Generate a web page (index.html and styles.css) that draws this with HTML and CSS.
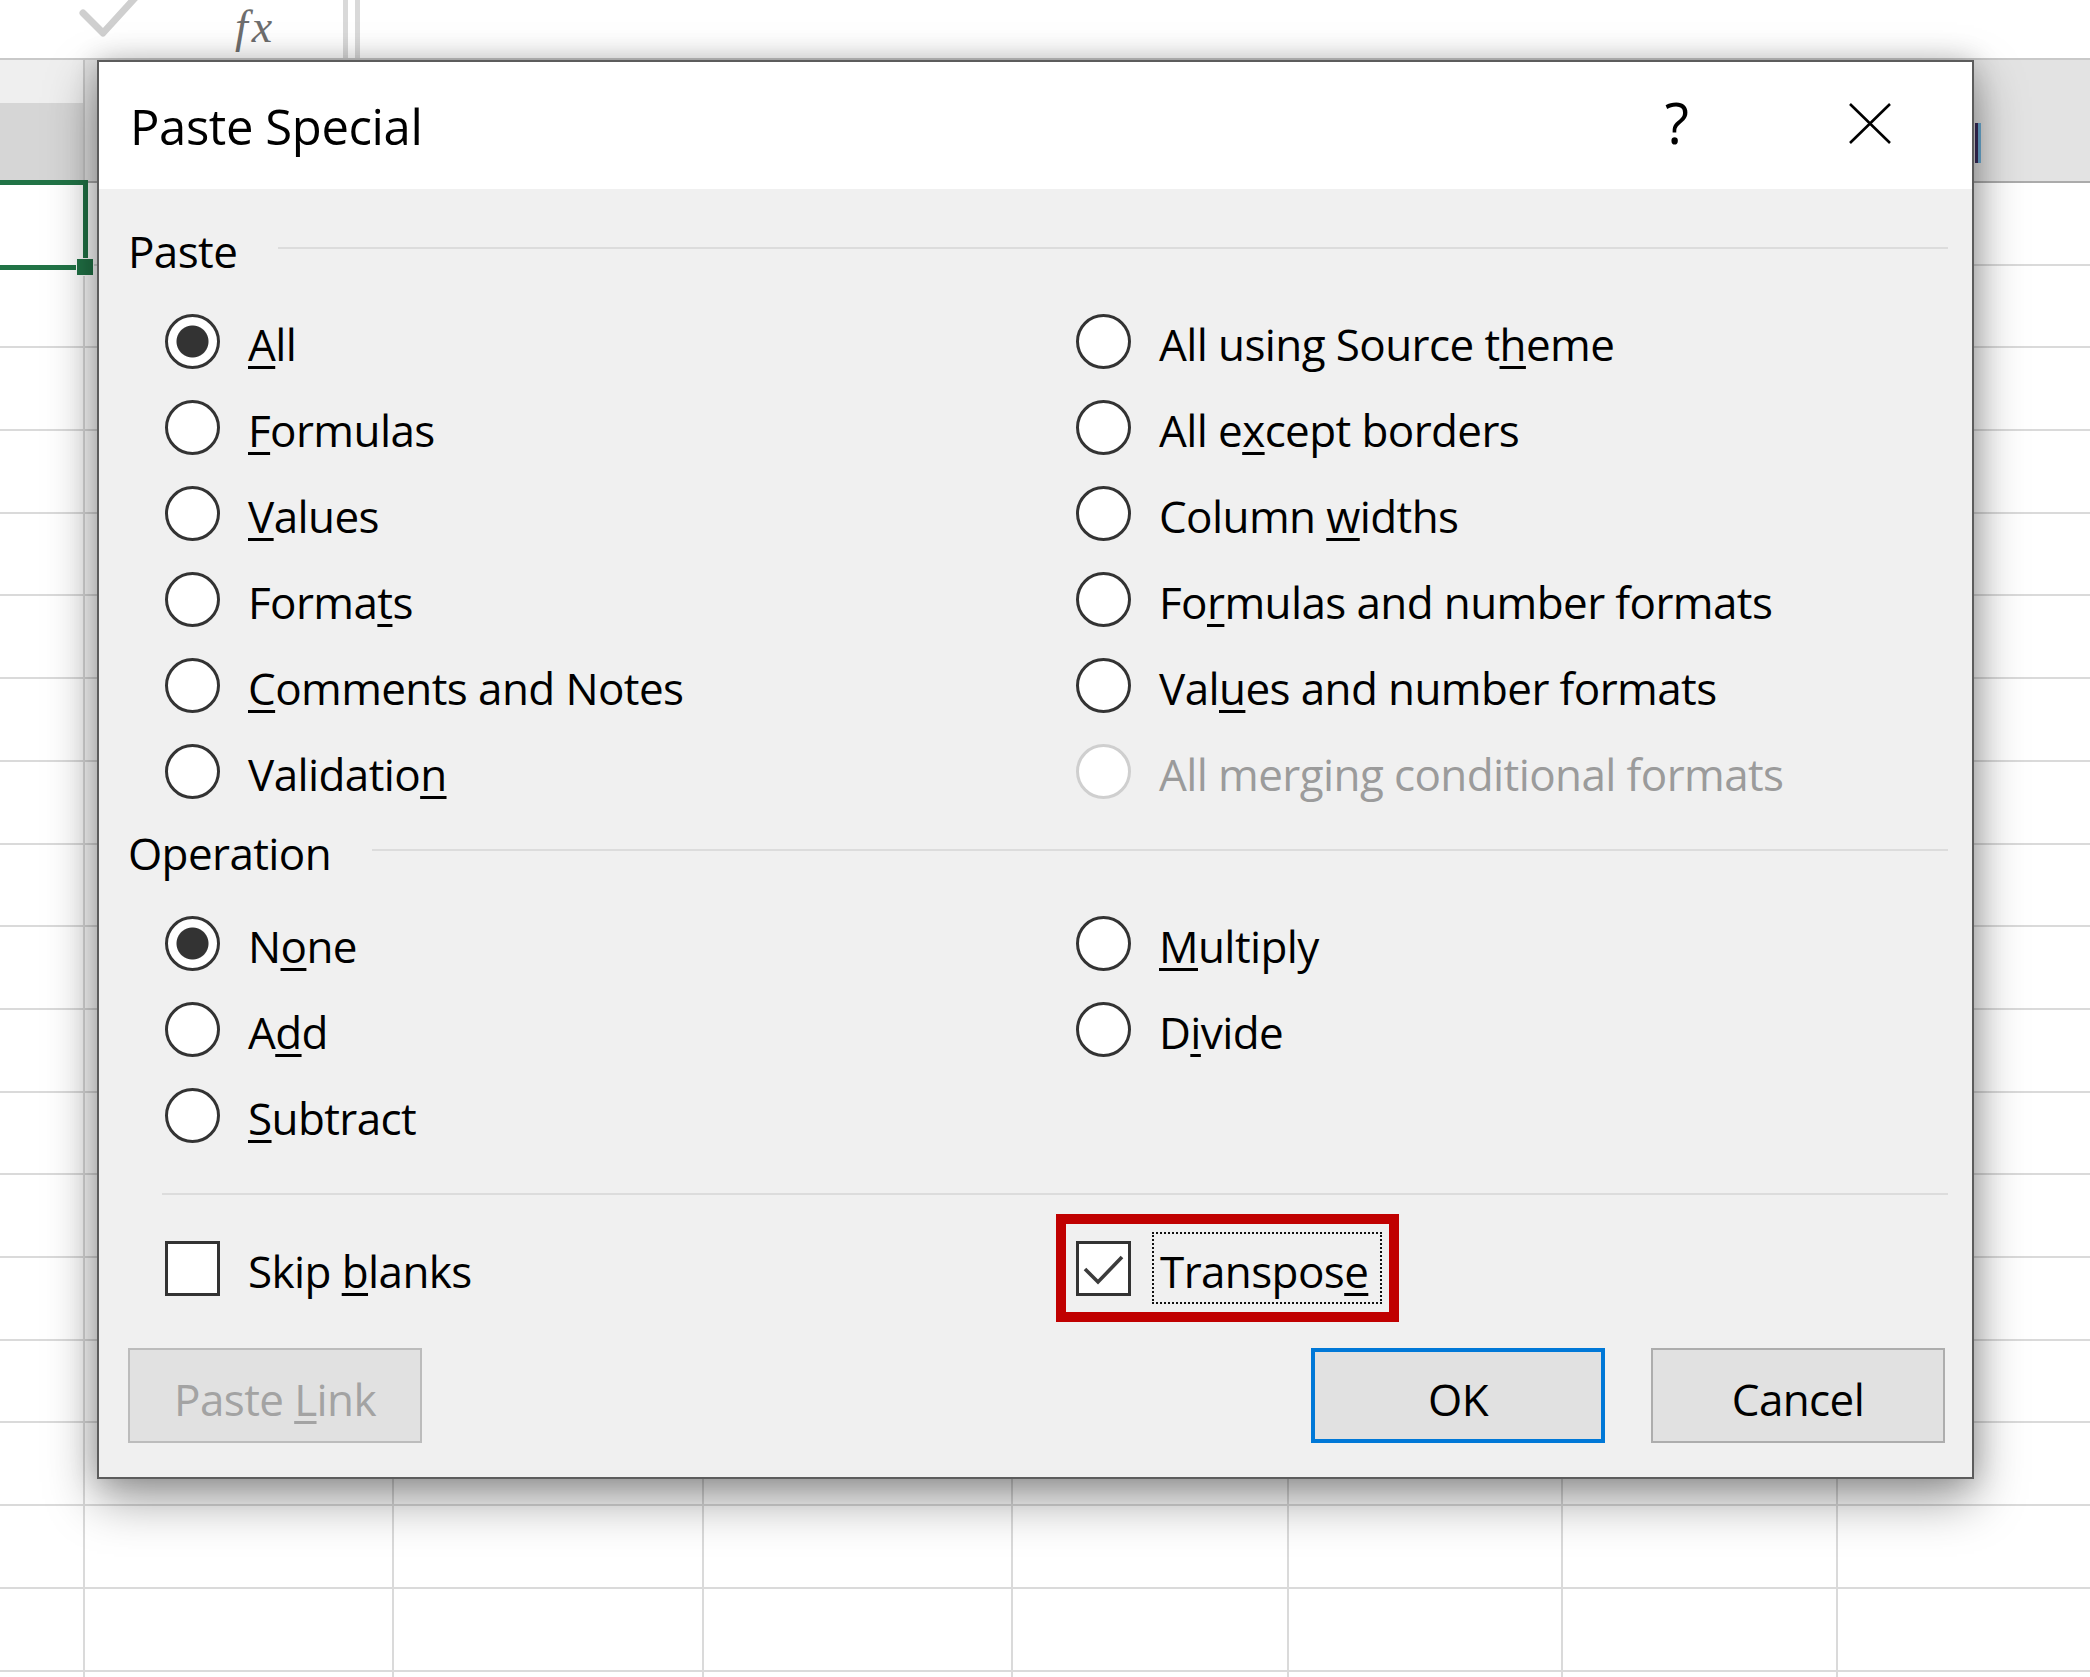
FILE: index.html
```html
<!DOCTYPE html>
<html lang="en">
<head>
<meta charset="utf-8">
<title>Paste Special</title>
<link rel="stylesheet" href="styles.css">
</head>
<body>
<div class="sheet">
  <div class="formula-bar">
    <svg class="fb-check" width="60" height="40" viewBox="0 0 60 40"><path d="M5 13 L25 33 L57 -2" fill="none" stroke="#cfcfcf" stroke-width="7" stroke-linecap="round" stroke-linejoin="round"/></svg>
    <span class="fb-fx">fx</span>
    <div class="fb-sep"></div>
  </div>
  <div class="col-header">
    <div class="hcell hcell-first"></div>
    <div class="hcell"></div>
    <div class="hcell"></div>
    <div class="hcell"></div>
    <div class="hcell"></div>
    <div class="hcell"></div>
    <div class="hcell"></div>
    <div class="hcell hcell-last"><span class="hdr-mark"></span></div>
  </div>
  <div class="cells">
    <div class="col"><div class="sel"><span class="handle"></span></div></div>
    <div class="col"></div>
    <div class="col"></div>
    <div class="col"></div>
    <div class="col"></div>
    <div class="col"></div>
    <div class="col"></div>
    <div class="col col-last"></div>
  </div>
</div>

<div class="dialog">
  <div class="titlebar">
    <span class="title">Paste Special</span>
    <span class="help">?</span>
    <svg class="close" width="42" height="41" viewBox="0 0 42 41"><path d="M1 1 L41 40 M41 1 L1 40" stroke="#000" stroke-width="2.6" fill="none"/></svg>
  </div>
  <div class="body">
    <div class="group-head"><span class="group-label">Paste</span><span class="group-line"></span></div>
    <div class="options">
      <div class="opt"><span class="radio on"></span><span class="lbl"><u>A</u>ll</span></div>
      <div class="opt"><span class="radio"></span><span class="lbl">All using Source t<u>h</u>eme</span></div>
      <div class="opt"><span class="radio"></span><span class="lbl"><u>F</u>ormulas</span></div>
      <div class="opt"><span class="radio"></span><span class="lbl">All e<u>x</u>cept borders</span></div>
      <div class="opt"><span class="radio"></span><span class="lbl"><u>V</u>alues</span></div>
      <div class="opt"><span class="radio"></span><span class="lbl">Column <u>w</u>idths</span></div>
      <div class="opt"><span class="radio"></span><span class="lbl">Forma<u>t</u>s</span></div>
      <div class="opt"><span class="radio"></span><span class="lbl">Fo<u>r</u>mulas and number formats</span></div>
      <div class="opt"><span class="radio"></span><span class="lbl"><u>C</u>omments and Notes</span></div>
      <div class="opt"><span class="radio"></span><span class="lbl">Val<u>u</u>es and number formats</span></div>
      <div class="opt"><span class="radio"></span><span class="lbl">Validatio<u>n</u></span></div>
      <div class="opt opt-dis"><span class="radio"></span><span class="lbl">All mer<u>g</u>ing conditional formats</span></div>
    </div>
    <div class="group-head"><span class="group-label">Operation</span><span class="group-line"></span></div>
    <div class="options">
      <div class="opt"><span class="radio on"></span><span class="lbl">N<u>o</u>ne</span></div>
      <div class="opt"><span class="radio"></span><span class="lbl"><u>M</u>ultiply</span></div>
      <div class="opt"><span class="radio"></span><span class="lbl">A<u>d</u>d</span></div>
      <div class="opt"><span class="radio"></span><span class="lbl">D<u>i</u>vide</span></div>
      <div class="opt"><span class="radio"></span><span class="lbl"><u>S</u>ubtract</span></div>
    </div>
    <div class="sep"></div>
    <div class="checks">
      <div class="opt"><span class="checkbox"></span><span class="lbl">Skip <u>b</u>lanks</span></div>
      <div class="highlight">
        <span class="checkbox"><svg width="49" height="49" viewBox="0 0 49 49"><path d="M6 25 L19 38 L43 13" fill="none" stroke="#3c3c3c" stroke-width="3.6"/></svg></span>
        <span class="focus"><span class="lbl">Transpos<u>e</u></span></span>
      </div>
    </div>
    <div class="buttons">
      <div class="btn btn-disabled"><span class="lbl">Paste <u>L</u>ink</span></div>
      <div class="btn btn-default"><span class="lbl">OK</span></div>
      <div class="btn btn-cancel"><span class="lbl">Cancel</span></div>
    </div>
  </div>
</div>
</body>
</html>
```

FILE: styles.css
```css
html, body {
  margin: 0;
  padding: 0;
  background: #fff;
}

body {
  font-family: "Open Sans", "Noto Sans", sans-serif;
  color: #000;
  width: 2090px;
  height: 1677px;
  overflow: hidden;
  position: relative;
}

/* ---------- spreadsheet background ---------- */
.sheet {
  width: 2090px;
  height: 1677px;
  overflow: hidden;
  background: #fff;
}

.formula-bar {
  height: 58px;
  border-bottom: 2px solid #c9c9c9;
  display: flex;
  align-items: flex-start;
  padding-left: 78px;
  overflow: hidden;
  background: #fff;
}

.fb-check {
  flex: none;
}

.fb-fx {
  flex: none;
  width: 70px;
  margin-left: 97px;
  font-family: "Liberation Serif", serif;
  font-style: italic;
  font-size: 46px;
  line-height: normal;
  letter-spacing: 4px;
  color: #6e6e6e;
}

.fb-sep {
  flex: none;
  margin-left: 38px;
  width: 17px;
  height: 58px;
  box-sizing: border-box;
  border-left: 5px solid #d9d9d9;
  border-right: 5px solid #d9d9d9;
}

.col-header,
.cells {
  display: grid;
  grid-template-columns: 85px 309px 310px 309px 276px 274px 275px 252px;
}

.col-header {
  height: 123px;
  box-sizing: border-box;
  border-bottom: 2px solid #ababab;
  background: #e3e3e3;
}

.hcell {
  border-right: 2px solid #c8c8c8;
}

.hcell-first {
  background: linear-gradient(to bottom, #efefef 0 43px, #d6d6d6 43px);
}

.hcell-last {
  border-right: none;
  display: flex;
}

.hdr-mark {
  width: 6px;
  height: 40px;
  margin: 63px 0 0 137px;
  background: linear-gradient(to right, #3b2d5c 0 3px, #6fb0d8 3px);
}

.cells {
  height: 1494px;
  background: repeating-linear-gradient(to bottom, transparent 0 80.7px, #dadada 80.7px 82.7px);
}

.col {
  border-right: 2px solid #dadada;
}

.col-last {
  border-right: none;
}

.sel {
  position: relative;
  box-sizing: border-box;
  width: 98px;
  height: 90px;
  margin-top: -3px;
  margin-left: -10px;
  border: 5px solid #217346;
  background: #fff;
}

.handle {
  position: absolute;
  right: -11px;
  bottom: -11px;
  width: 16px;
  height: 16px;
  background: #217346;
  border: 1px solid #fff;
}

/* ---------- dialog ---------- */
.dialog {
  position: absolute;
  left: 97px;
  top: 60px;
  width: 1877px;
  height: 1419px;
  box-sizing: border-box;
  border: 2px solid #5c5c5c;
  background: #f0f0f0;
  box-shadow: 0 20px 48px rgba(0, 0, 0, 0.40), 0 0 26px rgba(0, 0, 0, 0.18);
  display: flex;
  flex-direction: column;
}

.titlebar {
  flex: none;
  height: 127px;
  background: #fff;
  display: flex;
  align-items: center;
  padding-left: 31px;
  padding-right: 81px;
}

.title {
  font-size: 49px;
  letter-spacing: -0.4px;
}

.help {
  margin-left: auto;
  margin-bottom: 8px;
  font-size: 56px;
  font-weight: 400;
  line-height: 1;
}

.close {
  flex: none;
  margin-left: 160px;
  margin-bottom: 4px;
}

.body {
  flex: 1;
  padding: 23px 24px 34px 29px;
  display: flex;
  flex-direction: column;
  font-size: 44px;
  letter-spacing: -0.6px;
}

u {
  text-decoration-thickness: 3px;
  text-underline-offset: 5px;
}

.lbl {
  padding-top: 6px;
  white-space: nowrap;
}

.group-head {
  height: 86px;
  box-sizing: border-box;
  padding-bottom: 8px;
  display: flex;
  align-items: center;
  gap: 41px;
}

.group-line {
  flex: 1;
  height: 2px;
  background: #dcdcdc;
  margin-bottom: 6px;
}

.options {
  display: grid;
  grid-template-columns: 911px 1fr;
  grid-auto-rows: 86px;
  padding-left: 37px;
}

.opt {
  display: flex;
  align-items: center;
  gap: 28px;
}

.radio {
  flex: none;
  width: 55px;
  height: 55px;
  box-sizing: border-box;
  border: 3px solid #333;
  border-radius: 50%;
  background: #fff;
}

.radio.on {
  background: radial-gradient(circle, #333 0 15.5px, #fff 16.5px);
}

.opt-dis .radio {
  border-color: #cfcfcf;
}

.opt-dis .lbl {
  color: #9b9b9b;
}

.sep {
  height: 2px;
  background: #dcdcdc;
  margin: 35px 0 0 34px;
  flex: none;
}

.checks {
  flex: none;
  display: grid;
  grid-template-columns: 911px 1fr;
  height: 86px;
  margin-top: 30px;
  padding-left: 37px;
  align-items: center;
}

.checkbox {
  flex: none;
  width: 55px;
  height: 55px;
  box-sizing: border-box;
  border: 3px solid #333;
  background: #fff;
  display: block;
}

.checkbox svg {
  display: block;
}

.highlight {
  justify-self: start;
  display: flex;
  align-items: center;
  gap: 21px;
  border: 10px solid #c00000;
  padding: 8px 7px 8px 10px;
  margin: -11px 0 -11px -20px;
}

.focus {
  height: 72px;
  box-sizing: border-box;
  border: 2px dotted #111;
  display: flex;
  align-items: center;
  padding: 0 12px 0 6px;
}

.buttons {
  flex: none;
  display: flex;
  margin-top: 37px;
  height: 95px;
}

.btn {
  width: 294px;
  height: 95px;
  box-sizing: border-box;
  border: 2px solid #adadad;
  background: #e1e1e1;
  display: flex;
  align-items: center;
  justify-content: center;
}

.btn-disabled {
  color: #a3a3a3;
  border-color: #bcbcbc;
}

.btn-default {
  margin-left: auto;
  border: 4px solid #0078d7;
}

.btn-cancel {
  margin-left: 46px;
  margin-right: 3px;
}
```
